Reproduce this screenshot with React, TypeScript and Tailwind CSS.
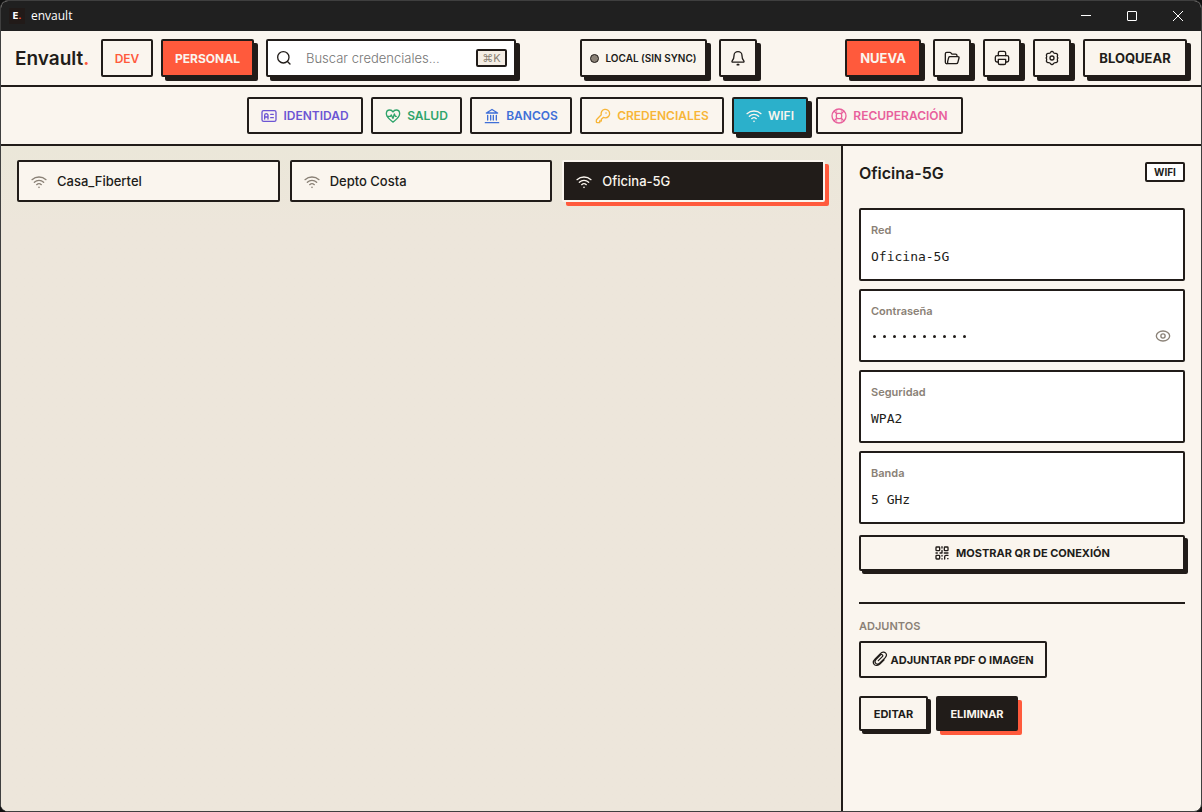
import type { ReactNode } from "react";

type IconProps = { size?: number; className?: string; children: ReactNode };

function Icon({ size = 16, className = "", children }: IconProps) {
  return (
    <svg
      width={size}
      height={size}
      viewBox="0 0 24 24"
      fill="none"
      stroke="currentColor"
      strokeWidth="2"
      strokeLinecap="round"
      strokeLinejoin="round"
      aria-hidden="true"
      className={`shrink-0 ${className}`}
    >
      {children}
    </svg>
  );
}

const searchShape = (
  <>
    <circle cx="11" cy="11" r="8.5" />
    <path d="M17.2 17.2 21 21" />
  </>
);
const bellShape = (
  <>
    <path d="M12 2.500C8.700 2.500 6 5 6 8.500c0 3.500-.7 5.500-2.500 7.500-1 1.200-.6 2.200.8 2.200h15.400c1.400 0 1.800-1 .8-2.200C18.700 14 18 12 18 8.500 18 5 15.300 2.500 12 2.500Z" />
    <path d="M11 22h2" strokeWidth="2.500" />
  </>
);
const folderShape = (
  <>
    <path d="M19.500 9.500V8.500c0-1.500-.7-2.200-2.200-2.200h-5.300L10.300 4.200c-.4-.5-.9-.7-1.500-.7H4.200C2.700 3.500 2 4.300 2 5.800V18.500c0 1.200.8 2 2 2" />
    <path d="M4 20.500c1 0 1.500-.5 1.500-1.500v-2L7 11.500c.3-1 .9-1.500 1.900-1.500h12c1.300 0 1.900.8 1.600 2l-1.700 6.500c-.3 1.300-1.100 2-2.500 2H4" />
  </>
);
const printerShape = (
  <>
    <path d="M6 18H4.500C2.800 18 2 17.200 2 15.500V11c0-1.700.8-2.500 2.500-2.500h15c1.700 0 2.500.8 2.500 2.500v4.500c0 1.700-.8 2.500-2.500 2.500H18" />
    <path d="M6.500 8.500V4.500C6.500 3 7.300 2 9 2h6c1.700 0 2.500 1 2.500 2.500v4" />
    <path d="M6.500 14h11v5.500c0 1.500-.8 2.300-2.500 2.300H9c-1.700 0-2.500-.8-2.500-2.300V14Z" />
  </>
);
const gearShape = (
  <>
    <path d="M10 3.300c.8-1.700 3.200-1.700 4 0 .7 1.400 1.900 2 3.500 1.800 2-.3 3.500 1.700 2.700 3.500-.6 1.400-.5 2.200.6 3.400-1.100 1.200-1.200 2-.6 3.400.8 1.800-.7 3.800-2.700 3.500-1.600-.2-2.800.4-3.500 1.800-.8 1.700-3.200 1.700-4 0-.7-1.400-1.900-2-3.500-1.800-2 .3-3.500-1.700-2.700-3.500.6-1.400.5-2.200-.6-3.400 1.100-1.200 1.200-2 .6-3.400-.8-1.800.7-3.800 2.700-3.500 1.600.2 2.800-.4 3.500-1.800Z" />
    <circle cx="12" cy="12" r="3" />
  </>
);
const identityShape = (
  <>
    <rect x="1.500" y="4" width="21" height="16" rx="2.500" />
    <path d="M5.500 16.500V11a2.500 2.500 0 0 1 5 0v5.500M5.500 13.500h5M14.500 9.500h4M14.500 14.500h4" />
  </>
);
const healthShape = (
  <>
    <path d="M12 21.200C9.500 19 2 14.200 2 8.700 2 5.500 4.300 3 7.200 3 9.300 3 11 4.100 12 6c1-1.900 2.700-3 4.800-3C19.700 3 22 5.500 22 8.700c0 5.500-7.500 10.300-10 12.500Z" />
    <path d="M3.500 12.500H8l1.500-2 2.500 5L14 9l1.500 3.500H17" />
  </>
);
const bankShape = (
  <path d="M3.500 7.500 12 2.200l8.500 5.300ZM5.500 11v7M10 11v7M14 11v7M18.500 11v7M2 22h20" />
);
const keyShape = (
  <>
    <path d="M15.500 14.800A6.400 6.400 0 1 0 9.400 10.200L2.900 17c-.6.600-.9 1.200-.9 2v1.500c0 1 .5 1.500 1.500 1.500H7v-2.500h2.500V17l3-2.800c1 .4 2 .6 3 .6Z" />
    <path d="M16.500 7.500h.1" strokeWidth="2.500" />
  </>
);
const wifiShape = (
  <>
    <path d="M1.500 8.500C7.500 3.200 16.500 3.200 22.500 8.500" />
    <path d="M5 12.300c4-3.600 10-3.600 14 0" />
    <path d="M8.500 16c2-1.800 5-1.800 7 0" />
    <path d="M12 20h.01" strokeWidth="2.500" />
  </>
);
const lifebuoyShape = (
  <>
    <circle cx="12" cy="12" r="10.500" />
    <rect x="8" y="8" width="8" height="8" rx="2.500" />
    <path d="M8.500 8.500 5 5M15.500 8.500 19 5M8.500 15.500 5 19M15.500 15.500 19 19" />
    <path d="M8.500 2.500V8M15.500 2.500V8M8.500 21.500V16M15.500 21.500V16" strokeWidth="1" />
  </>
);
const eyeShape = (
  <>
    <path d="M2 12c0-3.900 4.500-7.500 10-7.500S22 8.100 22 12s-4.500 7.500-10 7.500S2 15.900 2 12Z" />
    <circle cx="12" cy="12" r="3.200" />
  </>
);
const qrShape = (
  <>
    <rect x="3" y="3" width="5.500" height="5.500" rx="1" />
    <rect x="15.500" y="3" width="5.500" height="5.500" rx="1" />
    <rect x="3" y="15.500" width="5.500" height="5.500" rx="1" />
    <path d="M12 2.500v2M12 8v4H9M3 12h2M15.500 12H21M12 15.500v1M12 20.500v.5M16 21v-3.500c0-1.300.7-2 2-2h3M20.500 20.500h.5" />
  </>
);
const clipShape = (
  <path
    strokeWidth="1.800"
    d="m9.500 14.500 6-6c.8-.8.800-2 .1-2.700-.8-.7-2-.7-2.700.1l-7 7c-1.700 1.700-1.700 4.200-.2 5.700 1.500 1.500 4 1.500 5.700-.2l8.200-8.200c2.300-2.300 2.400-5.500.6-7.300-1.800-1.800-5-1.700-7.300.6l-8.200 8.200c-3 3-3.200 6.700-1.200 8.700 2 2 5.700 1.800 8.700-1.200l6-6"
  />
);

const frame = "rounded-[2px] border-2 border-[#211c19] bg-[#faf5ee]";
const raised = "shadow-[4px_4px_0_#211c19]";
const raisedSmall = "shadow-[3px_3px_0_#211c19]";
const centered = "flex items-center justify-center whitespace-nowrap";

const categories = [
  { label: "IDENTIDAD", shape: identityShape, look: "w-[116px] bg-[#faf5ee] text-[#6c55d4]" },
  { label: "SALUD", shape: healthShape, look: "w-[91px] bg-[#faf5ee] text-[#2fa46b]" },
  { label: "BANCOS", shape: bankShape, look: "w-[102px] bg-[#faf5ee] text-[#3f6fd8]" },
  { label: "CREDENCIALES", shape: keyShape, look: "w-36 bg-[#faf5ee] text-[#f7b538]" },
  { label: "WIFI", shape: wifiShape, look: "w-[76px] bg-[#2bb0cb] text-[#faf5ee] shadow-[4px_4px_0_#211c19]" },
  { label: "RECUPERACIÓN", shape: lifebuoyShape, look: "w-[147px] bg-[#faf5ee] text-[#e8609c]" },
];

const networks = [
  { name: "Casa_Fibertel", active: false },
  { name: "Depto Costa", active: false },
  { name: "Oficina-5G", active: true },
];

const fields = [
  { label: "Red", value: "Oficina-5G", secret: false },
  { label: "Contraseña", value: "••••••••••", secret: true },
  { label: "Seguridad", value: "WPA2", secret: false },
  { label: "Banda", value: "5 GHz", secret: false },
];

function TitleBar() {
  const control = "flex h-full w-[46px] items-center justify-center";
  return (
    <div className="flex h-[30px] items-center bg-[#202020] pl-2 text-white">
      <span className="flex size-4 items-center justify-center bg-[#211a18] font-['Inter',sans-serif] text-[9px] font-extrabold">
        E<span className="text-[#ff5a3c]">.</span>
      </span>
      <span className="ml-1.5 font-['Open_Sans','Noto_Sans',sans-serif] text-xs">envault</span>
      <div className="ml-auto flex h-full">
        <button type="button" aria-label="Minimizar" className={control}>
          <svg width="10" height="10" viewBox="0 0 10 10" stroke="currentColor"><path d="M0 4.500h10" /></svg>
        </button>
        <button type="button" aria-label="Maximizar" className={control}>
          <svg width="10" height="10" viewBox="0 0 10 10" fill="none" stroke="currentColor"><rect x=".5" y=".5" width="9" height="9" rx=".5" /></svg>
        </button>
        <button type="button" aria-label="Cerrar" className={control}>
          <svg width="10" height="10" viewBox="0 0 10 10" stroke="currentColor"><path d="m0 0 10 10M10 0 0 10" /></svg>
        </button>
      </div>
    </div>
  );
}

function IconButton({ label, children }: { label: string; children: ReactNode }) {
  return (
    <button type="button" aria-label={label} className={`${frame} ${raised} ${centered} size-[38px] shrink-0`}>
      <Icon>{children}</Icon>
    </button>
  );
}

function Header() {
  return (
    <header className="flex items-center justify-between border-b-2 border-[#211c19] px-3.5 py-2">
      <div className="flex items-center gap-3">
        <h1 className="w-[74px] pt-0.5 text-[19px] font-semibold whitespace-nowrap">
          Envault<span className="text-[#ff5a3c]">.</span>
        </h1>
        <div className="flex gap-2">
          <button type="button" className={`${frame} ${centered} h-[38px] w-[52px] pt-0.5 text-xs font-semibold text-[#ff5a3c]`}>DEV</button>
          <button type="button" className={`${centered} ${raised} h-[38px] w-[93px] rounded-[2px] border-2 border-[#211c19] bg-[#ff5a3c] pt-0.5 text-xs font-bold text-[#faf5ee]`}>PERSONAL</button>
        </div>
        <label className={`flex h-[38px] w-[250px] items-center rounded-[2px] border-2 border-[#211c19] bg-white pr-[7px] pl-2 ${raised}`}>
          <Icon>{searchShape}</Icon>
          <input
            type="search"
            aria-label="Buscar credenciales"
            placeholder="Buscar credenciales..."
            className="ml-3.5 min-w-0 flex-1 bg-transparent pt-0.5 text-[13px] font-light outline-none placeholder:text-[#757575]"
          />
          <kbd className="flex h-[18px] w-[31px] items-center justify-center rounded-[2px] border-2 border-[#211c19] bg-[#f5eee5] font-['Inter','DejaVu_Sans',sans-serif] text-[11px] text-[#8a8176]">⌘K</kbd>
        </label>
      </div>

      <div className="mr-6 flex gap-3">
        <button type="button" className={`${frame} ${raised} ${centered} h-[38px] w-[127px] gap-1.5 text-[10px] font-semibold`}>
          <span className="size-[9px] rounded-full border border-[#211c19] bg-[#8a8176]" />
          LOCAL (SIN SYNC)
        </button>
        <IconButton label="Notificaciones">{bellShape}</IconButton>
      </div>

      <div className="flex gap-3">
        <button type="button" className={`${centered} ${raised} h-[38px] w-[76px] rounded-[2px] border-2 border-[#211c19] bg-[#ff5a3c] pt-0.5 text-[13px] font-bold text-[#faf5ee]`}>NUEVA</button>
        <IconButton label="Abrir carpeta">{folderShape}</IconButton>
        <IconButton label="Imprimir">{printerShape}</IconButton>
        <IconButton label="Configuración">{gearShape}</IconButton>
        <button type="button" className={`${frame} ${raised} ${centered} h-[38px] w-[104px] pt-0.5 text-[13px] font-bold`}>BLOQUEAR</button>
      </div>
    </header>
  );
}

function CategoryBar() {
  return (
    <nav aria-label="Categorías" className="flex justify-center gap-2 border-b-2 border-[#211c19] py-2.5 pl-2">
      {categories.map((c) => (
        <button key={c.label} type="button" className={`${centered} h-[37px] gap-1.5 rounded-[2px] border-2 border-[#211c19] text-xs font-semibold ${c.look}`}>
          <Icon>{c.shape}</Icon>
          {c.label}
        </button>
      ))}
    </nav>
  );
}

function NetworkList() {
  return (
    <main className="min-w-0 flex-1 bg-[#ede6db] bg-linear-to-b from-[#ebe7d9] to-[#ede6db] to-[80px] px-4 py-3.5">
      <ul className="grid grid-cols-3 gap-2.5">
        {networks.map((n) => (
          <li key={n.name}>
            <button
              type="button"
              className={`flex h-[42px] w-full items-center gap-2.5 rounded-[2px] border-2 px-3 pt-0.5 text-left text-[13px] font-medium ${
                n.active
                  ? "border-[#faf5ee] bg-[#211c19] text-[#faf5ee] shadow-[4px_4px_0_#ff5a3c]"
                  : "border-[#211c19] bg-[#faf5ee]"
              }`}
            >
              <Icon className={n.active ? "" : "text-[#8a8176]"}>{wifiShape}</Icon>
              {n.name}
            </button>
          </li>
        ))}
      </ul>
    </main>
  );
}

function Details() {
  return (
    <aside className="w-[360px] shrink-0 border-l-2 border-[#211c19] p-4">
      <div className="flex h-[46px] items-start justify-between">
        <h2 className="text-base leading-[22px] font-semibold">Oficina-5G</h2>
        <span className="flex h-5 w-10 items-center justify-center rounded-[2px] border-2 border-[#211c19] bg-white text-[10px] font-bold">WIFI</span>
      </div>

      <dl className="grid gap-2">
        {fields.map((f) => (
          <div key={f.label} className="h-[73px] rounded-[2px] border-2 border-[#211c19] bg-white px-2.5 pt-3">
            <dt className="text-[11px] leading-4 font-semibold text-[#8a8176]">{f.label}</dt>
            <dd className="mt-[9px] flex items-center justify-between pr-0.5 font-['DejaVu_Sans_Mono','Liberation_Mono',monospace] text-[13px] leading-5">
              {f.secret ? (
                <span className="flex gap-[7px] pl-0.5" role="img" aria-label="Contraseña oculta">
                  {Array.from(f.value, (_, i) => (
                    <span key={i} className="size-[3px] rounded-full bg-[#211c19]" />
                  ))}
                </span>
              ) : (
                f.value
              )}
              {f.secret && (
                <button type="button" aria-label="Mostrar contraseña" className="text-[#8a8176]">
                  <Icon>{eyeShape}</Icon>
                </button>
              )}
            </dd>
          </div>
        ))}
      </dl>

      <button type="button" className={`${frame} ${raisedSmall} ${centered} mt-[11px] h-9 w-full gap-1.5 text-[11px] font-bold`}>
        <Icon>{qrShape}</Icon>
        MOSTRAR QR DE CONEXIÓN
      </button>

      <section className="mt-[31px] border-t-2 border-[#211c19] pt-3.5">
        <h3 className="text-[11px] leading-4 font-semibold text-[#8a8176]">ADJUNTOS</h3>
        <button type="button" className={`${frame} ${centered} mt-[7px] h-[37px] w-[188px] gap-0.5 pt-0.5 text-[11px] font-bold`}>
          <Icon className="mb-1">{clipShape}</Icon>
          ADJUNTAR PDF O IMAGEN
        </button>
      </section>

      <div className="mt-[18px] flex gap-2">
        <button type="button" className={`${frame} ${raisedSmall} ${centered} h-[35px] w-[69px] pt-0.5 text-[11px] font-bold`}>EDITAR</button>
        <button type="button" className={`${centered} h-[35px] w-[82px] rounded-[2px] bg-[#211c19] pt-0.5 text-[11px] font-bold text-[#faf5ee] shadow-[4px_4px_0_#ff5a3c]`}>ELIMINAR</button>
      </div>
    </aside>
  );
}

export default function App() {
  return (
    <div className="min-h-screen bg-[#111111]">
      <div className="flex min-h-screen flex-col overflow-hidden rounded-lg border border-[#3f3f3f] bg-[#faf5ee] font-['Inter','Liberation_Sans',sans-serif] text-[#211c19]">
        <TitleBar />
        <Header />
        <CategoryBar />
        <div className="flex flex-1">
          <NetworkList />
          <Details />
        </div>
      </div>
    </div>
  );
}
